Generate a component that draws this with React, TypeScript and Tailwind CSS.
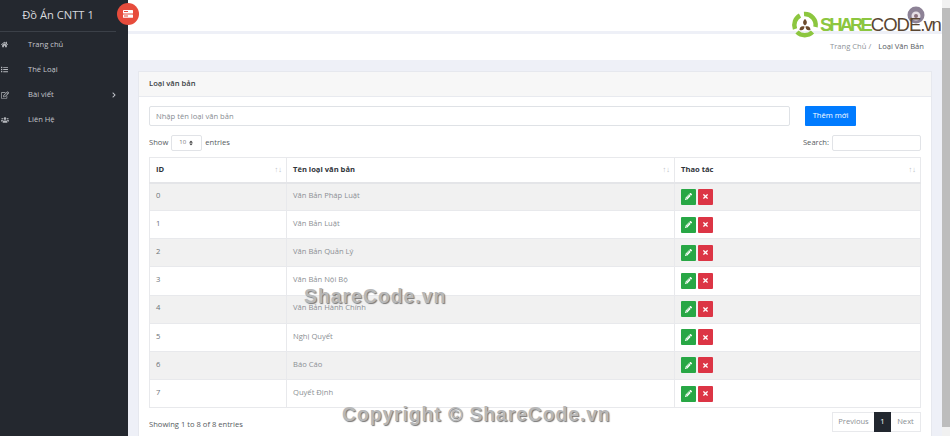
import { FaHome, FaList, FaRegEdit, FaUsers, FaChevronRight, FaPencilAlt, FaTimes, FaSort } from "react-icons/fa";

const rows = ["Văn Bản Pháp Luật", "Văn Bản Luật", "Văn Bản Quản Lý", "Văn Bản Nội Bộ", "Văn Bản Hành Chính", "Nghị Quyết", "Báo Cáo", "Quyết Định"];

function Sort() {
  return <span className="absolute right-[4px] top-[7px] text-[7.5px] leading-[8px] text-[#b9bcc2]">↑↓</span>;
}

function Nav({ icon, label, chevron }: { icon: React.ReactNode; label: string; chevron?: boolean }) {
  return (
    <div className="flex h-[25px] items-center text-[7.6px] text-[#c3c6cc]">
      <span className="flex w-[28px] items-center pl-[1px] text-[#b5b8bd]">{icon}</span>
      <span>{label}</span>
      {chevron && <FaChevronRight className="ml-auto mr-[11px] size-[6px]" />}
    </div>
  );
}

export default function App() {
  return (
    <div className="relative flex h-[436px] w-[950px] overflow-hidden bg-white font-['Open_Sans',sans-serif]">
      <aside className="relative w-[128px] shrink-0 bg-[#24282f]">
        <div className="mr-[12px] flex h-[32px] items-center justify-center border-b border-[#3b4048] text-[11.2px] text-[#d8dade]">Đồ Án CNTT 1</div>
        <div className="flex flex-col">
          <Nav icon={<FaHome className="size-[7px]" />} label="Trang chủ" />
          <Nav icon={<FaList className="size-[7px]" />} label="Thể Loại" />
          <Nav icon={<FaRegEdit className="size-[8px]" />} label="Bài viết" chevron />
          <Nav icon={<FaUsers className="size-[8px]" />} label="Liên Hệ" />
        </div>
        <div className="absolute left-[117px] top-[3px] flex size-[22px] items-center justify-center rounded-full bg-[#e74c3c]">
          <svg width="10" height="8" viewBox="0 0 10 8"><rect width="10" height="3.4" fill="#fff" rx="0.5" /><rect y="4.4" width="10" height="3.4" fill="#fff" rx="0.5" /><rect x="1" y="1" width="4" height="1" fill="#e74c3c" /><rect x="1" y="5.5" width="4" height="1" fill="#e74c3c" /></svg>
        </div>
      </aside>

      <main className="flex min-w-0 flex-1 flex-col bg-[#eef0f7]">
        <div className="h-[34px] shrink-0 border-b-[3px] border-[#eef0f7] bg-white" />
        <div className="flex h-[26px] shrink-0 items-center justify-end bg-white pr-[18px] text-[7.6px]">
          <span className="text-[#8e9298]">Trang Chủ /</span>
          <span className="ml-[7px] text-[#555a60]">Loại Văn Bản</span>
        </div>
        <div className="flex-1 px-[10px] pt-[11px]">
          <div className="h-[400px] w-[794px] border border-[#e6e8ee] bg-white">
            <div className="flex h-[25px] items-center border-b border-[#e8eaef] bg-[#f7f7f7] px-[10px] text-[7.6px] font-semibold text-[#3a3f45]">Loại văn bản</div>
            <div className="px-[10px] pt-[9px]">
              <div className="flex items-center">
                <input className="h-[20px] w-[641px] rounded-[2px] border border-[#dfe2e6] bg-white px-[6px] text-[7.6px] outline-none placeholder:text-[#868b91]" placeholder="Nhập tên loại văn bản" />
                <button className="ml-[15px] h-[20px] w-[51px] rounded-[1px] bg-[#007bff] text-[7.6px] text-white">Thêm mới</button>
              </div>
              <div className="mt-[8px] flex h-[17px] items-center text-[7.6px] text-[#555a60]">
                <span>Show</span>
                <span className="mx-[3px] flex h-[16px] w-[31px] items-center justify-between rounded-[2px] border border-[#e1e3e7] px-[7px] text-[6px] text-[#777]">10 <FaSort className="size-[6px] text-[#444]" /></span>
                <span>entries</span>
                <span className="ml-auto">Search:</span>
                <input className="ml-[3px] h-[16px] w-[89px] rounded-[2px] border border-[#e1e3e7] outline-none" />
              </div>
              <table className="mt-[6px] w-[772px] table-fixed border-collapse border border-[#e8e9ec] text-[7.6px]">
                <colgroup><col className="w-[137px]" /><col className="w-[388px]" /><col /></colgroup>
                <thead>
                  <tr className="h-[25px] border-b-2 border-[#e4e5e8] text-left text-[#2f343a]">
                    {["ID", "Tên loại văn bản", "Thao tác"].map((h) => (
                      <th key={h} className="relative border-r border-[#e8e9ec] px-[6px] font-bold">{h}<Sort /></th>
                    ))}
                  </tr>
                </thead>
                <tbody>
                  {rows.map((r, i) => (
                    <tr key={r} className={`h-[28.15px] border-b border-[#e8e9ec] ${i % 2 === 0 ? "bg-[#f1f1f1]" : "bg-white"}`}>
                      <td className="border-r border-[#e8e9ec] px-[6px] pb-[2px] text-[#6c7177]">{i}</td>
                      <td className="border-r border-[#e8e9ec] px-[6px] pb-[2px] text-[#8b8f94]">{r}</td>
                      <td className="px-[6px]">
                        <div className="flex gap-[2px]">
                          <span className="flex h-[16px] w-[15px] items-center justify-center rounded-[1px] bg-[#28a745]"><FaPencilAlt className="size-[7px] text-white" /></span>
                          <span className="flex h-[16px] w-[15px] items-center justify-center rounded-[1px] bg-[#dc3545]"><FaTimes className="size-[7px] text-white" /></span>
                        </div>
                      </td>
                    </tr>
                  ))}
                </tbody>
              </table>
              <div className="mt-[4px] flex items-center justify-between text-[7.6px] text-[#555a60]">
                <span className="mt-[6px]">Showing 1 to 8 of 8 entries</span>
                <div className="flex h-[20px] w-[89px] items-center justify-between border border-[#e8e9ec] text-[#8b8f94]">
                  <span className="flex-1 text-center">Previous</span>
                  <span className="flex h-[20px] w-[17px] items-center justify-center bg-[#22272f] text-white">1</span>
                  <span className="w-[29px] text-center">Next</span>
                </div>
              </div>
            </div>
          </div>
        </div>
      </main>
      <div className="w-[8px] shrink-0 bg-[#f1f1f1]"><div className="mt-[8px] h-[419px] bg-[#bdbdbd]" /></div>

      <svg className="absolute left-[790px] top-[10px]" width="32" height="30" viewBox="0 0 32 30">
        <g fill="none" stroke="#8cc63f" strokeWidth="4.5">
          <path d="M14 4a11 11 0 0 1 11.5 13" />
          <path d="M22.5 22a11 11 0 0 1-15.5 0" />
          <path d="M5 19A11 11 0 0 1 10 5.5" />
        </g>
        <path d="M15 9c2.500 2 2.500 5 0 6.500-2.500-1.500-2.500-4.500 0-6.500zM9.500 20c0-3 2-4.500 5-3.500 0 3-2 4.500-5 3.500zM20.500 20c0-3-2-4.500-5-3.500 0 3 2 4.500 5 3.500z" fill="#6b4a2b" />
      </svg>
      <svg className="absolute left-[907px] top-[6px]" width="18" height="18" viewBox="0 0 18 18">
        <circle cx="9" cy="9" r="8.500" fill="#8d8296" />
        <circle cx="9" cy="10" r="4.500" fill="#e6dfe6" />
        <circle cx="9" cy="10" r="2" fill="#8a6f7d" />
      </svg>
      <div className="absolute left-[820px] top-[13px] flex items-baseline whitespace-nowrap font-['Liberation_Sans',sans-serif] text-[18.5px] leading-[24px]">
        <span className="font-bold tracking-[-3px] text-[#8cc63f]">SHARE</span>
        <span className="ml-[1px] tracking-[-1px] text-[#5a4632]">CODE</span>
        <span className="tracking-[-1.5px] text-[#5a4632]">.vn</span>
      </div>
      <div className="absolute left-[304px] top-[282px] font-['Liberation_Sans',sans-serif] text-[19.4px] font-bold tracking-[1px] text-[#b8b8b8] [text-shadow:1px_1px_1px_#777]">ShareCode.vn</div>
      <div className="absolute left-[342px] top-[400px] font-['Liberation_Sans',sans-serif] text-[19.4px] font-bold tracking-[0.9px] text-[#b8b8b8] [text-shadow:1px_1px_1px_#777]">Copyright © ShareCode.vn</div>
    </div>
  );
}
